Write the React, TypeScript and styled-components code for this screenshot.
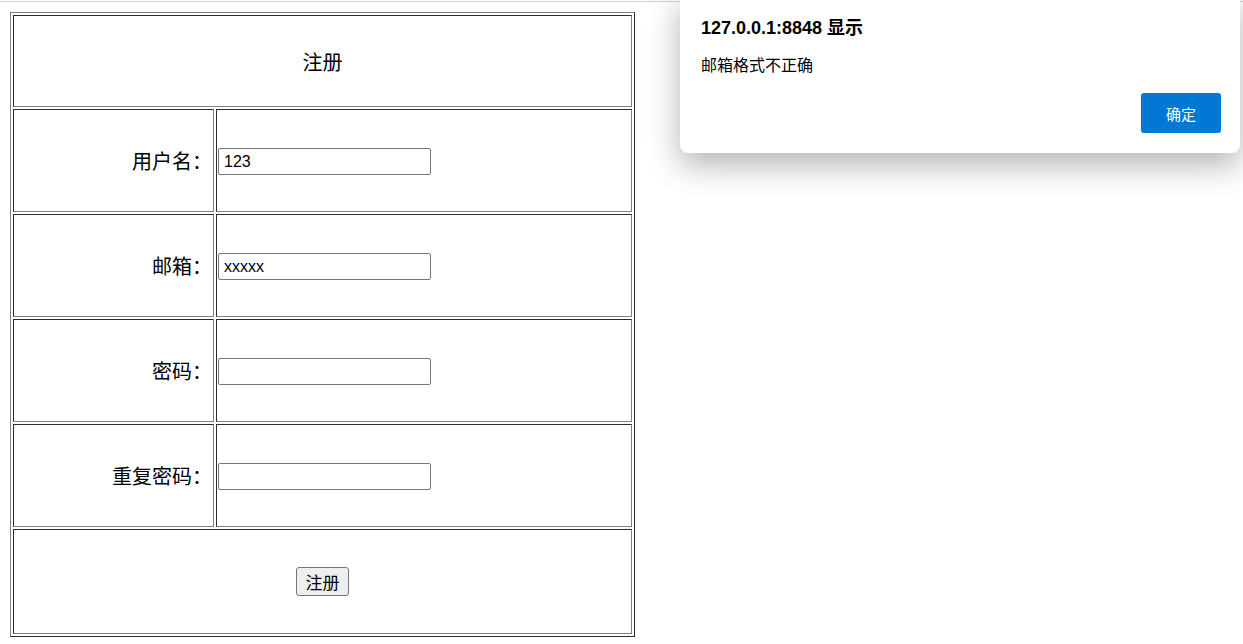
import React from 'react';
import styled, {createGlobalStyle} from 'styled-components';

const GlobalStyle = createGlobalStyle`
  html, body {
    margin: 0;
    padding: 0;
    background: #ffffff;
  }
  body {
    font-family: "Noto Sans CJK SC", "Liberation Sans", sans-serif;
    color: #000000;
  }
`;

const Page = styled.div`
  position: relative;
  width: 1243px;
  height: 644px;
  overflow: hidden;
`;

const TopRule = styled.div`
  margin-top: 1px;
  height: 1px;
  background: #cdcdcd;
`;

const FormTable = styled.div`
  display: grid;
  grid-template-columns: 201px 416px;
  grid-template-rows: 92px repeat(4, 103px) 105px;
  gap: 2px;
  padding: 2px;
  width: max-content;
  margin: 10px 0 0 10px;
  border: 1px outset gray;
`;

const Cell = styled.div<{ $align: 'left' | 'right' | 'center'; $wide?: boolean }>`
  box-sizing: border-box;
  display: flex;
  align-items: center;
  justify-content: ${p => p.$align === 'left' ? 'flex-start' : p.$align === 'right' ? 'flex-end' : 'center'};
  grid-column: ${p => p.$wide ? 'span 2' : 'auto'};
  padding: 1px;
  border: 1px inset gray;
  font-size: 20px;
  white-space: nowrap;
`;

const TextInput = styled.input`
  box-sizing: border-box;
  width: 213px;
  height: 27px;
  margin: 2px 0 0;
  padding: 1px 2px 1px 5px;
  border: 1px solid #767676;
  border-radius: 2px;
  background: #ffffff;
  color: #000000;
  font: 16px "Liberation Sans", Arial, sans-serif;
  outline: none;
`;

const SubmitButton = styled.button`
  box-sizing: border-box;
  width: 53px;
  height: 29px;
  padding: 0;
  border: 1px solid #767676;
  border-radius: 3px;
  background: #efefef;
  color: #000000;
  font: 17px "Noto Sans CJK SC", sans-serif;
`;

const Dialog = styled.div`
  position: absolute;
  top: -8px;
  left: 680px;
  box-sizing: border-box;
  width: 560px;
  height: 161px;
  display: flex;
  flex-direction: column;
  padding: 23px 19px 20px 21px;
  background: #ffffff;
  border-radius: 8px;
  box-shadow: 0 12px 32px rgba(0, 0, 0, 0.3);
`;

const DialogTitle = styled.div`
  font: bold 18px/26px "Liberation Sans", "Noto Sans CJK SC", sans-serif;
  color: #000000;
`;

const DialogMessage = styled.div`
  margin-top: 12px;
  font: 16px/22px "Noto Sans CJK SC", sans-serif;
  color: #000000;
`;

const DialogActions = styled.div`
  margin-top: auto;
  display: flex;
  justify-content: flex-end;
`;

const OkButton = styled.button`
  width: 80px;
  height: 40px;
  padding: 0;
  border: none;
  border-radius: 3px;
  background: #0078d4;
  color: #ffffff;
  font: 15px "Noto Sans CJK SC", sans-serif;
`;

const fields = [
  {label: '用户名：', type: 'text', value: '123'},
  {label: '邮箱：', type: 'text', value: 'xxxxx'},
  {label: '密码：', type: 'password', value: ''},
  {label: '重复密码：', type: 'password', value: ''},
];

export default function App() {
  return (
    <Page>
      <GlobalStyle/>
      <TopRule/>
      <FormTable>
        <Cell $align="center" $wide>注册</Cell>
        {fields.map(f => (
          <React.Fragment key={f.label}>
            <Cell $align="right">{f.label}</Cell>
            <Cell $align="left">
              <TextInput type={f.type} defaultValue={f.value}/>
            </Cell>
          </React.Fragment>
        ))}
        <Cell $align="center" $wide>
          <SubmitButton type="button">注册</SubmitButton>
        </Cell>
      </FormTable>
      <Dialog>
        <DialogTitle>127.0.0.1:8848 显示</DialogTitle>
        <DialogMessage>邮箱格式不正确</DialogMessage>
        <DialogActions>
          <OkButton type="button">确定</OkButton>
        </DialogActions>
      </Dialog>
    </Page>
  );
}
